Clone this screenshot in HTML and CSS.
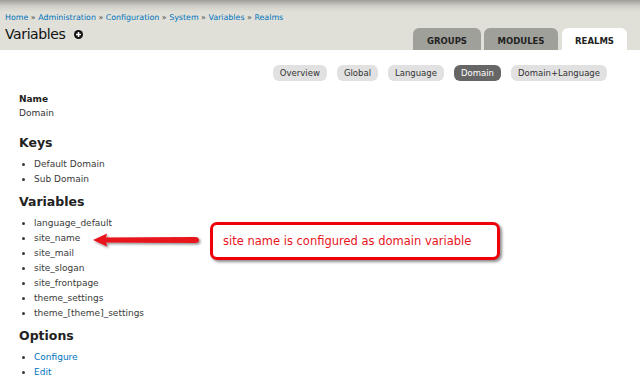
FILE: index.html
```html
<!DOCTYPE html>
<html>
<head>
<meta charset="utf-8">
<link rel="stylesheet" href="styles.css">
</head>
<body>
<div class="header">
  <div class="head-left">
    <div class="crumbs"><a>Home</a> » <a>Administration</a> » <a>Configuration</a> » <a>System</a> » <a>Variables</a> » <a>Realms</a></div>
    <h1 class="title">Variables <span class="plus"><svg width="9" height="9" viewBox="0 0 9 9"><circle cx="4.5" cy="4.5" r="4.5" fill="#111"/><path d="M4.5 2v5M2 4.5h5" stroke="#fff" stroke-width="1.6"/></svg></span></h1>
  </div>
  <ul class="tabs">
    <li class="tab">GROUPS</li>
    <li class="tab">MODULES</li>
    <li class="tab active">REALMS</li>
  </ul>
</div>
<div class="subtabs">
  <span class="pill">Overview</span>
  <span class="pill">Global</span>
  <span class="pill">Language</span>
  <span class="pill on">Domain</span>
  <span class="pill">Domain+Language</span>
</div>
<div class="content">
  <div class="label">Name</div>
  <div class="value">Domain</div>
  <h2 class="first">Keys</h2>
  <ul class="list">
    <li>Default Domain</li>
    <li>Sub Domain</li>
  </ul>
  <h2>Variables</h2>
  <div class="varwrap">
    <ul class="list">
      <li>language_default</li>
      <li>site_name</li>
      <li>site_mail</li>
      <li>site_slogan</li>
      <li>site_frontpage</li>
      <li>theme_settings</li>
      <li>theme_[theme]_settings</li>
    </ul>
    <svg class="arrow" width="112" height="20" viewBox="0 0 112 20">
      <defs><filter id="sh" x="-10%" y="-40%" width="130%" height="200%"><feDropShadow dx="1.5" dy="1.5" stdDeviation="1" flood-color="#000" flood-opacity="0.45"/></filter></defs>
      <path d="M1 9 L15 2.5 L14 6.5 L103 6 Q107 6 107 9 Q107 12 103 12 L14 11.5 L15 15.5 Z" fill="#e8141c" filter="url(#sh)"/>
    </svg>
    <div class="callout">site name is configured as domain variable</div>
  </div>
  <h2>Options</h2>
  <ul class="list links">
    <li><a>Configure</a></li>
    <li><a>Edit</a></li>
  </ul>
</div>
</body>
</html>
```
FILE: styles.css
```css
html, body { margin: 0; padding: 0; background: #fff; }
body { font-family: "DejaVu Sans", Verdana, sans-serif; color: #333; width: 640px; height: 388px; overflow: hidden; }
a { color: #0074bd; text-decoration: none; }
.header {
  height: 50px;
  background: linear-gradient(#9e9e99 0px, #cfcfc7 6px, #e0e0d8 12px, #e0e0d8 100%);
  display: flex;
  justify-content: space-between;
  align-items: flex-end;
}
.head-left { padding-left: 5px; padding-top: 12px; align-self: flex-start; }
.crumbs { font-size: 7.9px; color: #444; line-height: 11px; }
.title { margin: 2px 0 0; font-weight: normal; font-size: 14px; letter-spacing: -0.4px; line-height: 18px; color: #111; display: flex; align-items: center; }
.plus { display: inline-flex; margin-left: 9px; }
.tabs { list-style: none; margin: 0 13px 0 0; padding: 0; display: flex; gap: 3px; }
.tab {
  width: 68px; height: 22px; box-sizing: border-box;
  background: #a0a09a; border-radius: 6px 6px 0 0;
  font-size: 8.5px; font-weight: bold; color: #222;
  display: flex; align-items: center; justify-content: center; padding-top: 3px;
}
.tab:nth-child(2) { width: 74px; }
.tab.active { background: #fff; width: 65px; margin-left: 1px; }
.subtabs { display: flex; justify-content: flex-end; gap: 10px; padding: 15px 33px 0 0; }
.pill {
  background: #e1e1e1; border-radius: 6px; font-size: 8.5px; color: #333;
  height: 16px; line-height: 16px; padding: 0 7px;
}
.pill.on { background: #666; color: #fff; }
.content { padding: 11px 0 0 19px; }
.label { font-weight: bold; font-size: 9px; color: #222; line-height: 14px; }
.value { font-size: 9px; line-height: 15px; }
h2 { margin: 7px 0 6px; font-size: 12.5px; line-height: 16px; color: #222; font-weight: bold; }
h2.first { margin-top: 14px; }
.list { margin: 0; padding: 0 0 0 15px; font-size: 9px; line-height: 15px; color: #3a3a3a; }
.varwrap { position: relative; }
.arrow { position: absolute; left: 73px; top: 15px; }
.callout {
  position: absolute; left: 191px; top: 6px; width: 274px; height: 32px;
  border: 3px solid #f0000a; border-radius: 7px; background: #fff;
  color: #e8141c; font-size: 11.5px; padding-left: 10px;
  display: flex; align-items: center;
  box-shadow: 2px 2px 3px rgba(0,0,0,0.45);
}
```
